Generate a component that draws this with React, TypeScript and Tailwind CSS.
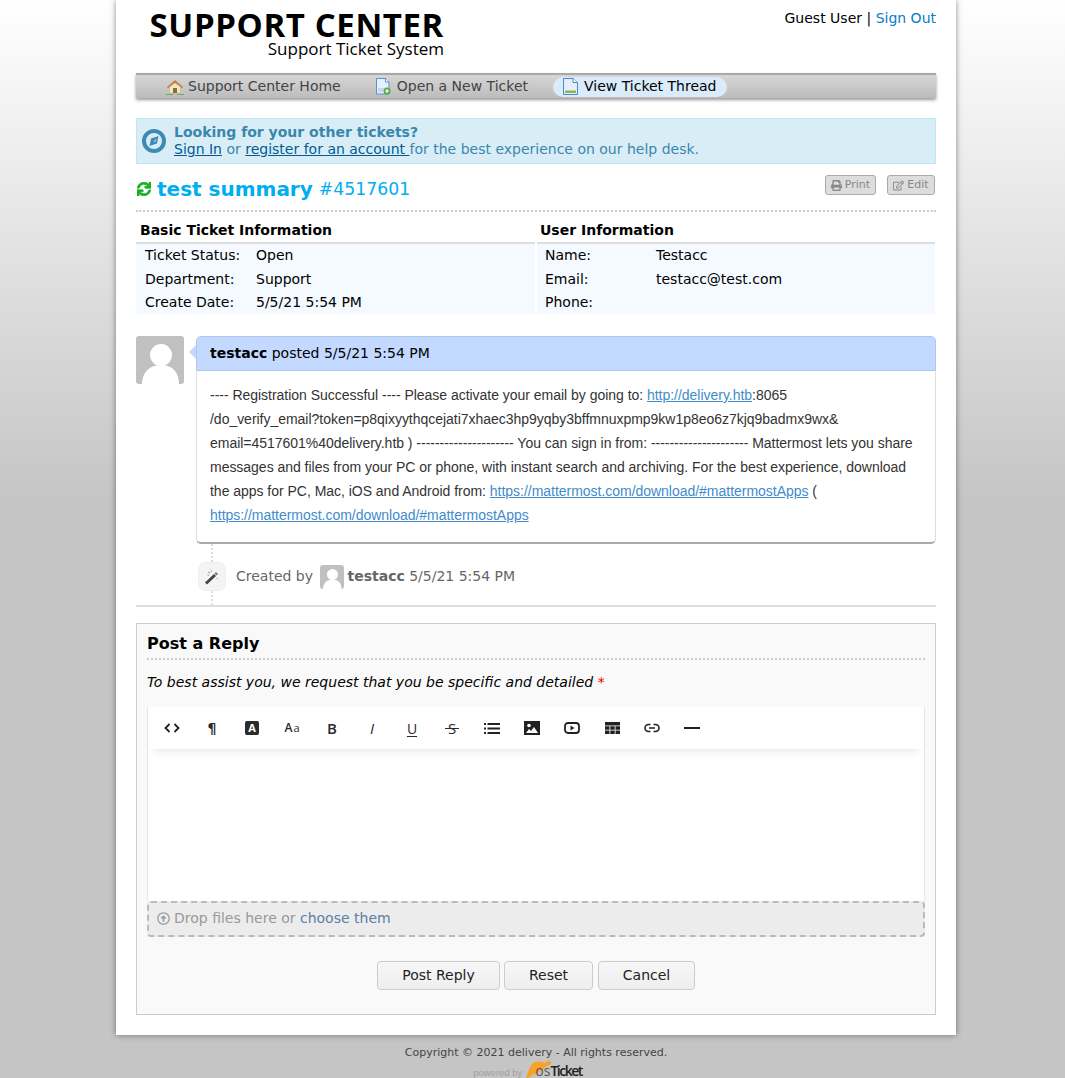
import React from 'react';
import { FaPrint, FaRegEdit, FaSync, FaRegArrowAltCircleUp } from 'react-icons/fa';

// avatar placeholder: grey square with a white bust
function Avatar({ size }: { size: number }) {
  return (
    <svg width={size} height={size} viewBox="0 0 48 48" className="block rounded-[3px] shrink-0">
      <rect width="48" height="48" fill="#c0c0c0" />
      <circle cx="25" cy="19" r="11" fill="#fff" />
      <path d="M6 48c0-12 8-19 19-19s18 7 18 19z" fill="#fff" />
    </svg>
  );
}

function HomeIcon() {
  return (
    <svg width="18" height="16" viewBox="0 0 18 16" className="shrink-0">
      <path d="M1 8 9 1l8 7-1 1.500L9 4 2 9.500z" fill="#c9803a" />
      <path d="M3.500 8 9 4l5.500 4v6h-11z" fill="#f1e6c8" stroke="#b9a98a" strokeWidth="0.500" />
      <rect x="7" y="9" width="4" height="5" fill="#8a6d3b" />
      <path d="M0 15h7v1H0zM11 15h7v1h-7z" fill="#6fae4c" />
    </svg>
  );
}

function NewTicketIcon() {
  return (
    <svg width="16" height="17" viewBox="0 0 16 17" className="shrink-0">
      <path d="M1.500.500h9l3.500 3.500v12h-12.500z" fill="#e6f0fb" stroke="#5b8fd0" />
      <path d="M10.500.500v3.500h3.500" fill="#fff" stroke="#5b8fd0" />
      <path d="M3 11h7M3 13h5" stroke="#9dbde6" />
      <circle cx="12" cy="13" r="3.500" fill="#5aa84a" />
      <path d="M10 13h4M12 11v4" stroke="#fff" strokeWidth="1.200" />
    </svg>
  );
}

function ViewTicketIcon() {
  return (
    <svg width="15" height="17" viewBox="0 0 15 17" className="shrink-0">
      <path d="M.500.500h9.500l4.500 4v12h-14z" fill="#e4effb" stroke="#4f86cc" />
      <path d="M10 .500v4h4.500" fill="#fff" stroke="#4f86cc" />
      <rect x="2" y="12.500" width="11" height="2.500" fill="#8db652" />
    </svg>
  );
}

function CompassIcon() {
  return (
    <svg width="24" height="24" viewBox="0 0 24 24" className="shrink-0">
      <circle cx="12" cy="12" r="10" fill="none" stroke="#3d8ab3" strokeWidth="4" />
      <path d="M16.500 7 15 14.500 7.500 17 9 9.500z" fill="#3d8ab3" />
      <path d="M14.500 9l-.8 3.500-2.200.8z" fill="#b9dcec" />
    </svg>
  );
}

function WandIcon() {
  return (
    <svg width="16" height="16" viewBox="0 0 16 16">
      <path d="M1 13.500 10 5l2 2-9 8.500z" fill="#444" />
      <path d="M10.500 4.500 12 3l2 2-1.500 1.500z" fill="#777" />
      <path d="M4 3l2 1M7 1.500l1 1.500M3.500 6l1.500.3M13 9l.5 1" stroke="#999" strokeWidth="1" />
    </svg>
  );
}

function ToolGlyph({ children, className }: { children: React.ReactNode; className?: string }) {
  return (
    <span className={`w-10 h-[42px] flex items-center justify-center text-[#2a2a2a] font-['Open_Sans',sans-serif] ${className ?? ''}`}>
      {children}
    </span>
  );
}

function Toolbar() {
  return (
    <div className="h-[42px] flex items-center pl-1 bg-white shadow-[0_8px_10px_-6px_rgba(0,0,0,0.10)] relative">
      <ToolGlyph>
        <svg width="16" height="10" viewBox="0 0 16 10" fill="none" stroke="#222" strokeWidth="1.800">
          <path d="M5.500 1 1.500 5l4 4M10.500 1l4 4-4 4" />
        </svg>
      </ToolGlyph>
      <ToolGlyph>
        <span className="font-['DejaVu_Sans',sans-serif] text-[14px] font-bold">¶</span>
      </ToolGlyph>
      <ToolGlyph>
        <span className="w-[14px] h-[14px] rounded-[2px] bg-[#2a2a2a] text-white text-[11px] font-bold leading-[14px] text-center">A</span>
      </ToolGlyph>
      <ToolGlyph className="text-[12px] font-semibold">
        A<span className="text-[11px] font-normal ml-[1px]">a</span>
      </ToolGlyph>
      <ToolGlyph className="text-[15px] font-semibold">B</ToolGlyph>
      <ToolGlyph className="text-[15px] italic">I</ToolGlyph>
      <ToolGlyph className="text-[14px] underline underline-offset-2">U</ToolGlyph>
      <ToolGlyph className="text-[15px]">
        <span className="relative">
          S
          <span className="absolute -left-[3px] -right-[3px] top-[11px] h-px bg-[#2a2a2a]" />
        </span>
      </ToolGlyph>
      <ToolGlyph>
        <svg width="16" height="11" viewBox="0 0 16 11" fill="#222">
          <path d="M0 0h2v2H0zM0 4.500h2v2H0zM0 9h2v2H0zM3.500 0H16v2H3.500zM3.500 4.500H16v2H3.500zM3.500 9H16v2H3.500z" />
        </svg>
      </ToolGlyph>
      <ToolGlyph>
        <svg width="16" height="14" viewBox="0 0 16 14">
          <rect width="16" height="14" fill="#222" />
          <circle cx="5" cy="4.500" r="1.800" fill="#fff" />
          <path d="M2 12l3-4 2 2 3-4 4 6z" fill="#fff" />
        </svg>
      </ToolGlyph>
      <ToolGlyph>
        <svg width="16" height="12" viewBox="0 0 16 12">
          <rect x="1" y="1" width="14" height="10" rx="3" fill="none" stroke="#222" strokeWidth="1.800" />
          <path d="M6.500 3.500v5l4-2.500z" fill="#222" />
        </svg>
      </ToolGlyph>
      <ToolGlyph>
        <svg width="15" height="12" viewBox="0 0 15 12" fill="#222">
          <path d="M0 0h15v3.500H0zM0 4.250h4.500v3.500H0zM5.300 4.250h4.400v3.500H5.300zM10.500 4.250H15v3.500h-4.500zM0 8.500h4.500V12H0zM5.300 8.500h4.400V12H5.300zM10.500 8.500H15V12h-4.500z" />
        </svg>
      </ToolGlyph>
      <ToolGlyph>
        <svg width="16" height="10" viewBox="0 0 16 10" fill="none" stroke="#222" strokeWidth="1.600">
          <path d="M6.500 1.500H4.500a3.500 3.500 0 0 0 0 7h2M9.500 1.500h2a3.500 3.500 0 0 1 0 7h-2M5 5h6" />
        </svg>
      </ToolGlyph>
      <ToolGlyph>
        <span className="w-4 h-[2px] bg-[#222]" />
      </ToolGlyph>
    </div>
  );
}

function OsTicketLogo() {
  return (
    <div className="flex items-end justify-center h-[18px] pr-[17px]">
      <span className="text-[9.500px] text-[#a0a0a0] font-['Liberation_Sans',sans-serif] leading-[11px] mr-[1px]">powered by</span>
      <svg width="29" height="18" viewBox="0 0 29 18" className="-mr-[17px] shrink-0">
        <path d="M3 18C5 13 6 8 9 4c3-3 8-3 13-1l4-3 1 2 1-1v3c-3 2-6 3-8 5-3 2-6 4-7 6l-2-1c-2 1-5 3-7 6z" fill="#f7a328" />
      </svg>
      <span className="relative text-[14px] leading-[14px] text-[#555] font-['Open_Sans',sans-serif]">os</span>
      <span className="relative text-[14px] leading-[14px] text-[#222] font-semibold font-['Open_Sans',sans-serif] tracking-[-1.500px]">Ticket</span>
    </div>
  );
}

const linkBody = 'text-[#428bca] underline';

export default function App() {
  return (
    <div className="h-[1078px] overflow-hidden bg-[linear-gradient(#ffffff,#c5c5c5_500px)] font-['DejaVu_Sans',sans-serif] text-[14px] text-black">
      <div className="w-[840px] h-[1035px] ml-[116px] bg-white px-5 shadow-[0_0_6px_rgba(0,0,0,0.45)]">
        {/* header */}
        <div className="h-[73px] flex justify-between">
          <div className="pt-[10px] w-[308px] flex flex-col items-end font-['Open_Sans',sans-serif]">
            <div className="text-[33px] h-[30px] leading-[30px] font-bold tracking-[0.6px] whitespace-nowrap">SUPPORT CENTER</div>
            <div className="text-[17px] h-[18px] leading-[18px] whitespace-nowrap">Support Ticket System</div>
          </div>
          <div className="pt-[10px] leading-[17px]">
            Guest User | <a className="text-[#0a7cc4]">Sign Out</a>
          </div>
        </div>

        {/* nav */}
        <div className="h-[25px] flex items-center pl-[30px] border-t-2 border-[#a8a8a8] bg-[linear-gradient(#d6d6d6,#bcbcbc)] shadow-[0_2px_3px_rgba(0,0,0,0.4)] text-[#444]">
          <div className="flex items-center gap-[4px] mr-[34px]"><HomeIcon />Support Center Home</div>
          <div className="flex items-center gap-[6px] mr-[25px]"><NewTicketIcon />Open a New Ticket</div>
          <div className="flex items-center gap-[6px] h-5 px-[10px] rounded-[10px] bg-[#daebfb] text-black"><ViewTicketIcon />View Ticket Thread</div>
        </div>

        {/* info banner */}
        <div className="mt-5 h-[46px] flex items-center gap-[8px] pl-[5px] border border-[#bce8f1] bg-[#d9edf7] text-[#3a87ad] leading-[17px]">
          <CompassIcon />
          <div>
            <div className="font-bold">Looking for your other tickets?</div>
            <div>
              <a className="text-[#005c94] underline">Sign In</a> or <a className="text-[#005c94] underline">register for an account </a>for the best experience on our help desk.
            </div>
          </div>
        </div>

        {/* title */}
        <div className="mt-[10px] h-[38px] flex justify-between items-start border-b-2 border-dotted border-[#ccc]">
          <div className="flex items-center h-[30px] text-[#00aeef] whitespace-nowrap">
            <FaSync className="text-[#17b020] mr-[6px] ml-[1px] w-[14px] h-[14px]" stroke="currentColor" strokeWidth={30} />
            <span className="text-[20px] font-bold">test summary</span>
            <span className="text-[17.300px] ml-[6px] mt-[1px]">#4517601</span>
          </div>
          <div className="flex gap-[11px] pt-[1px] pr-[1px] text-[11px] text-[#888]">
            <span className="w-[51px] h-5 flex items-center justify-center gap-[3px] rounded-[3px] border border-[#aaa] bg-[#ddd]"><FaPrint className="w-[11px] h-[11px]" />Print</span>
            <span className="w-[48px] h-5 flex items-center justify-center gap-[3px] rounded-[3px] border border-[#aaa] bg-[#ddd]"><FaRegEdit className="w-[11px] h-[11px]" />Edit</span>
          </div>
        </div>

        {/* ticket info */}
        <div className="mt-[8px] flex gap-[2px]">
          <div className="w-[399px]">
            <div className="h-[24px] px-1 font-bold leading-[20px] border-b-2 border-[#ddd]">Basic Ticket Information</div>
            <div className="h-[70px] bg-[#f4faff] px-[9px] grid grid-cols-[111px_1fr] grid-rows-[23px_24px_23px] items-center">
              <span>Ticket Status:</span><span>Open</span>
              <span>Department:</span><span>Support</span>
              <span>Create Date:</span><span>5/5/21 5:54 PM</span>
            </div>
          </div>
          <div className="w-[398px]">
            <div className="h-[24px] px-[3px] font-bold leading-[20px] border-b-2 border-[#ddd]">User Information</div>
            <div className="h-[70px] bg-[#f4faff] px-[8px] grid grid-cols-[111px_1fr] grid-rows-[23px_24px_23px] items-center">
              <span>Name:</span><span>Testacc</span>
              <span>Email:</span><span>testacc@test.com</span>
              <span>Phone:</span><span></span>
            </div>
          </div>
        </div>

        {/* thread entry */}
        <div className="mt-[22px] flex gap-3 items-start">
          <Avatar size={48} />
          <div className="flex-1 relative">
            <div className="absolute -left-[7px] top-[9px] w-0 h-0 border-y-[7px] border-y-transparent border-r-[7px] border-r-[#c3d9ff]" />
            <div className="h-[35px] px-[13px] flex items-center bg-[#c3d9ff] border border-[#aec6ea] rounded-t-[5px]">
              <b>testacc</b>&nbsp;posted 5/5/21 5:54 PM
            </div>
            <div className="h-[173px] px-[13px] pt-[12px] border-x border-b-2 border-x-[#ddd] border-b-[#aaa] rounded-b-[5px] font-['Liberation_Sans',sans-serif] leading-[24px] text-[#333] tracking-[-0.025px]">
              ---- Registration Successful ---- Please activate your email by going to: <a className={linkBody}>http://delivery.htb</a>:8065
              <br />
              /do_verify_email?token=p8qixyythqcejati7xhaec3hp9yqby3bffmnuxpmp9kw1p8eo6z7kjq9badmx9wx&amp;
              <br />
              email=4517601%40delivery.htb ) --------------------- You can sign in from: --------------------- Mattermost lets you share messages and files from your PC or phone, with instant search and archiving. For the best experience, download the apps for PC, Mac, iOS and Android from: <a className={linkBody}>https://mattermost.com/download/#mattermostApps</a> ( <a className={linkBody}>https://mattermost.com/download/#mattermostApps</a>
            </div>
          </div>
        </div>

        {/* timeline event */}
        <div className="ml-[62px] h-[61px] flex flex-col items-start text-[#666]">
          <div className="ml-[12.500px] w-0 h-[18px] border-l-2 border-dotted border-[#ddd]" />
          <div className="flex items-center gap-[10px] h-[29px]">
            <span className="w-[28px] h-[29px] flex items-center justify-center rounded-[7px] bg-[#f4f4f4] border border-[#eee]">
              <WandIcon />
            </span>
            <span className="flex items-center whitespace-nowrap">
              Created by&nbsp;
              <span className="w-[24px] ml-[3px] mr-[3px]"><Avatar size={24} /></span>
              <b>testacc</b>&nbsp;5/5/21 5:54 PM
            </span>
          </div>
          <div className="ml-[12.500px] w-0 h-[14px] border-l-2 border-dotted border-[#ddd]" />
        </div>
        <div className="h-[2px] bg-[#ddd]" />

        {/* reply form */}
        <div className="mt-[16px] h-[392px] border border-[#ccc] bg-[#f9f9f9] px-[10px]">
          <div className="h-[36px] pt-[10px] text-[16px] font-bold leading-[20px] border-b-2 border-dotted border-[#ccc]">Post a Reply</div>
          <div className="mt-[13px] italic leading-[18px]">
            To best assist you, we request that you be specific and detailed <span className="text-[#e00]">*</span>
          </div>
          <div className="mt-[16px] border-x border-[#e8e8e8]">
            <Toolbar />
            <div className="h-[152px] bg-white" />
          </div>
          <div className="h-[36px] flex items-center gap-[4px] px-[8px] pb-[2px] rounded-[4px] border-2 border-dashed border-[#bbb] bg-[#ececec] text-[#999]">
            <FaRegArrowAltCircleUp className="w-[13px] h-[13px]" />
            <span>Drop files here or <a className="text-[#5b7fa5]">choose them</a></span>
          </div>
          <div className="mt-[24px] flex justify-center gap-[4px]">
            <button className="w-[123px] h-[29px] rounded-[4px] border border-[#ccc] bg-[linear-gradient(#f7f7f7,#eeeeee)] text-[#222]">Post Reply</button>
            <button className="w-[89px] h-[29px] rounded-[4px] border border-[#ccc] bg-[linear-gradient(#f7f7f7,#eeeeee)] text-[#222]">Reset</button>
            <button className="w-[97px] h-[29px] ml-[1px] rounded-[4px] border border-[#ccc] bg-[linear-gradient(#f7f7f7,#eeeeee)] text-[#222]">Cancel</button>
          </div>
        </div>
      </div>

      {/* footer */}
      <div className="w-[840px] ml-[116px]">
        <div className="pt-[11px] text-center text-[11px] leading-[14px] text-[#444]">Copyright © 2021 delivery - All rights reserved.</div>
        <OsTicketLogo />
      </div>
    </div>
  );
}
